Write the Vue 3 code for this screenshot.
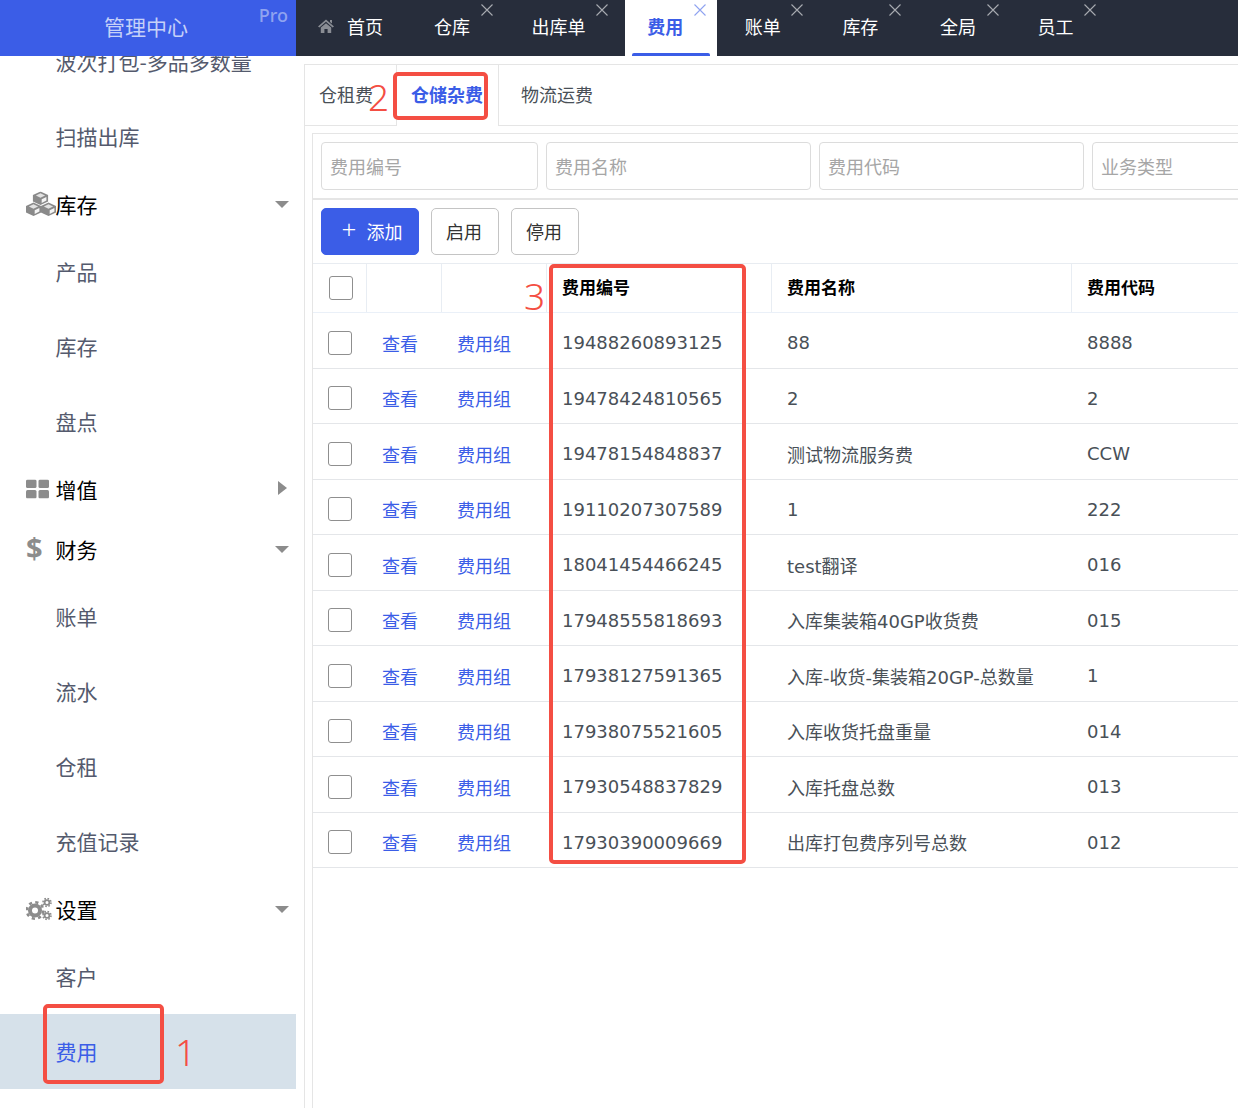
<script setup>
const tabs = [
  { name: '仓库' }, { name: '出库单' }, { name: '费用', active: true },
  { name: '账单' }, { name: '库存' }, { name: '全局' }, { name: '员工' },
]
const menu = [
  { type: 'sub', label: '波次打包-多品多数量' },
  { type: 'sub', label: '扫描出库' },
  { type: 'group', label: '库存', icon: 'cubes', caret: 'down' },
  { type: 'sub', label: '产品' },
  { type: 'sub', label: '库存' },
  { type: 'sub', label: '盘点' },
  { type: 'group', label: '增值', icon: 'grid', caret: 'right' },
  { type: 'group', label: '财务', icon: 'dollar', caret: 'down' },
  { type: 'sub', label: '账单' },
  { type: 'sub', label: '流水' },
  { type: 'sub', label: '仓租' },
  { type: 'sub', label: '充值记录' },
  { type: 'group', label: '设置', icon: 'gears', caret: 'down' },
  { type: 'sub', label: '客户' },
  { type: 'sub', label: '费用', active: true },
]
const rows = [
  ['19488260893125', '88', '8888'],
  ['19478424810565', '2', '2'],
  ['19478154848837', '测试物流服务费', 'CCW'],
  ['19110207307589', '1', '222'],
  ['18041454466245', 'test翻译', '016'],
  ['17948555818693', '入库集装箱40GP收货费', '015'],
  ['17938127591365', '入库-收货-集装箱20GP-总数量', '1'],
  ['17938075521605', '入库收货托盘重量', '014'],
  ['17930548837829', '入库托盘总数', '013'],
  ['17930390009669', '出库打包费序列号总数', '012'],
]
const filters = [
  { ph: '费用编号', cls: 'w1' },
  { ph: '费用名称', cls: 'w2' },
  { ph: '费用代码', cls: 'w2' },
  { ph: '业务类型', cls: 'w3' },
]
const cubes = [[14.5, 0], [7.5, 11], [22.5, 11]]
</script>

<template>
  <div class="page">
    <header class="top">
      <div class="logo">
        <span class="logo-text">管理中心</span>
        <span class="pro">Pro</span>
      </div>
      <nav class="nav">
        <div class="nav-tab home">
          <svg class="home-icon" viewBox="0 0 16 14" width="16" height="14">
            <path d="M8 0.5 L16 7.4 L14.6 8.4 L8 2.8 L1.4 8.4 L0 7.4 Z M12 1 H14 V4.6 L12 3 Z M2.8 8.6 L8 4.2 L13.2 8.6 V14 H9.6 V10 H6.4 V14 H2.8 Z" fill="#8a8d94" />
          </svg>
          <span>首页</span>
        </div>
        <div v-for="t in tabs" :key="t.name" class="nav-tab" :class="{ on: t.active }">
          <span>{{ t.name }}</span>
          <svg class="close" viewBox="0 0 12 12" width="12" height="12">
            <path d="M0.5 0.5 L11.5 11.5 M11.5 0.5 L0.5 11.5" stroke="currentColor" stroke-width="1.1" fill="none" />
          </svg>
        </div>
      </nav>
    </header>

    <div class="body">
      <aside class="side">
        <ul class="menu">
          <li v-for="(m, i) in menu" :key="i" class="item" :class="[m.type, { on: m.active }]">
            <span v-if="m.icon" class="ico">
              <svg v-if="m.icon === 'cubes'" viewBox="0 0 30 25" width="30" height="25">
                <g v-for="(c, k) in cubes" :key="k" :transform="`translate(${c[0]} ${c[1]})`">
                  <polygon points="0,0 7.6,3.6 7.6,10 0,13.6 -7.6,10 -7.6,3.6" fill="#8a8a8a" />
                  <polygon points="0,1.8 4.6,4 0,6.2 -4.6,4" fill="#e2e2e2" />
                  <polygon points="1.2,7.8 5.9,5.6 5.9,9 1.2,11.4" fill="#f4f4f4" />
                </g>
              </svg>
              <svg v-else-if="m.icon === 'grid'" viewBox="0 0 23 19" width="23" height="19">
                <rect x="0" y="0" width="10.5" height="8.5" rx="1.5" fill="#8c8c8c" />
                <rect x="12.5" y="0" width="10.5" height="8.5" rx="1.5" fill="#8c8c8c" />
                <rect x="0" y="10.5" width="10.5" height="8.5" rx="1.5" fill="#8c8c8c" />
                <rect x="12.5" y="10.5" width="10.5" height="8.5" rx="1.5" fill="#8c8c8c" />
              </svg>
              <span v-else-if="m.icon === 'dollar'" class="dollar">$</span>
              <svg v-else viewBox="0 0 26 23" width="26" height="23">
                <circle cx="9" cy="13" r="5" fill="none" stroke="#8c8c8c" stroke-width="4" />
                <circle cx="9" cy="13" r="8.2" fill="none" stroke="#8c8c8c" stroke-width="2.6" stroke-dasharray="3.2 3.24" />
                <circle cx="21" cy="5" r="2.4" fill="none" stroke="#8c8c8c" stroke-width="1.8" />
                <circle cx="21" cy="5" r="4" fill="none" stroke="#8c8c8c" stroke-width="1.6" stroke-dasharray="1.6 1.54" />
                <circle cx="21" cy="18" r="2.4" fill="none" stroke="#8c8c8c" stroke-width="1.8" />
                <circle cx="21" cy="18" r="4" fill="none" stroke="#8c8c8c" stroke-width="1.6" stroke-dasharray="1.6 1.54" />
              </svg>
            </span>
            <span class="label">{{ m.label }}</span>
            <i v-if="m.caret" class="caret" :class="m.caret"></i>
          </li>
        </ul>
      </aside>

      <main class="main">
        <div class="tabbar">
          <div class="tb first">仓租费</div>
          <div class="tb active">仓储杂费</div>
          <div class="tb third">物流运费</div>
          <div class="tb-rest"></div>
        </div>
        <section class="panel">
          <div class="search">
            <input v-for="f in filters" :key="f.ph" class="field" :class="f.cls" :placeholder="f.ph" />
          </div>
          <div class="tools">
            <button class="btn primary"><span class="plus">+</span>添加</button>
            <button class="btn">启用</button>
            <button class="btn">停用</button>
          </div>
          <div class="thead grid">
            <div class="cell chk-h"><span class="box"></span></div>
            <div class="cell"></div>
            <div class="cell"></div>
            <div class="cell">费用编号</div>
            <div class="cell">费用名称</div>
            <div class="cell">费用代码</div>
          </div>
          <div v-for="r in rows" :key="r[0]" class="trow grid">
            <div class="cell chk"><span class="box"></span></div>
            <div class="cell link">查看</div>
            <div class="cell link">费用组</div>
            <div class="cell">{{ r[0] }}</div>
            <div class="cell">{{ r[1] }}</div>
            <div class="cell">{{ r[2] }}</div>
          </div>
        </section>
      </main>
    </div>

    <div class="mark m1"></div><span class="num n1">1</span>
    <div class="mark m2"></div><span class="num n2">2</span>
    <div class="mark m3"></div><span class="num n3">3</span>
  </div>
</template>

<style scoped>
.page {
  position: relative;
  width: 1238px;
  height: 1108px;
  overflow: hidden;
  background: #fff;
  font-family: "DejaVu Sans", "Noto Sans CJK SC", sans-serif;
  font-size: 18px;
  color: #495057;
}
.page > * { box-sizing: border-box; }
.top { display: flex; height: 56px; background: #272d3b; }
.logo {
  position: relative;
  width: 296px;
  flex: none;
  box-sizing: border-box;
  padding: 0 3px 4px 0;
  background: #3b5de7;
  display: flex;
  align-items: center;
  justify-content: center;
}
.logo-text { font-family: "Noto Sans CJK SC", sans-serif; font-size: 21px; color: #c6d1f8; margin-left: -1px; }
.pro {
  position: absolute;
  right: 8px;
  top: 3px;
  font-family: "Noto Sans", sans-serif;
  font-weight: 500;
  font-size: 18px;
  color: #8fa3f0;
}
.nav { display: flex; }
.nav-tab {
  position: relative;
  display: flex;
  align-items: center;
  box-sizing: border-box;
  height: 56px;
  padding: 0 33.6px 4px 22px;
  margin-right: 6px;
  color: #fff;
  font-family: "Noto Sans CJK SC", sans-serif;
  font-size: 18px;
}
.nav-tab.home { padding-right: 23px; margin-right: 6px; }
.home-icon { margin-right: 13px; margin-top: -1px; }
.close { position: absolute; right: 11px; top: 4px; color: #a8abb1; }
.nav-tab.on { background: #fff; color: #3b5de7; font-weight: 700; }
.nav-tab.on .close { color: #8fa3f0; }
.nav-tab.on::after {
  content: "";
  position: absolute;
  left: 7px;
  right: 7px;
  bottom: 0;
  height: 3px;
  border-radius: 2px 2px 0 0;
  background: #3b5de7;
}
.body { display: flex; height: 1052px; }
.side { width: 296px; flex: none; overflow: hidden; }
.menu { list-style: none; margin: -32px 0 0; padding: 0; font-family: "Noto Sans CJK SC", sans-serif; font-size: 21px; }
.item { display: flex; align-items: center; box-sizing: border-box; padding-left: 55.5px; position: relative; }
.item.sub { height: 75px; padding-bottom: 2px; color: #545a6d; }
.item.group { height: 60px; padding-bottom: 1px; color: #000; }
.item.on { background: #d6e1ea; color: #3b5de7; }
.ico { position: absolute; left: 26px; top: 50%; display: flex; transform: translateY(-50%); }
.dollar { font-family: "Open Sans", sans-serif; font-weight: 700; font-size: 29px; color: #8c8c8c; line-height: 30px; margin-top: -3px; }
.caret { position: absolute; width: 0; height: 0; border-style: solid; border-color: transparent; }
.caret.down { right: 7px; top: 27px; border-width: 7px 7px 0; border-top-color: #8c8c8c; }
.caret.right { right: 9px; top: 22px; border-width: 7.5px 0 7.5px 9px; border-left-color: #8c8c8c; }
.main {
  flex: none;
  width: 934px;
  margin: 8px 0 0 8px;
  border-left: 1px solid #e5e5e5;
  overflow: hidden;
  box-sizing: border-box;
}
.tabbar {
  display: flex;
  height: 62px;
  box-sizing: border-box;
  border-top: 1px solid #e5e5e5;
  font-family: "Noto Sans CJK SC", sans-serif;
  font-size: 18px;
  color: #495057;
}
.tb { display: flex; align-items: center; box-sizing: border-box; padding-bottom: 2px; border-bottom: 1px solid #e5e5e5; }
.tb.first { width: 91px; padding-left: 14px; }
.tb.active {
  width: 103px;
  padding-left: 14px;
  padding-bottom: 4px;
  border-bottom: none;
  border-left: 1px solid #e5e5e5;
  border-right: 1px solid #e5e5e5;
  color: #3b5de7;
  font-weight: 700;
}
.tb.third { width: 110px; padding-left: 22px; }
.tb-rest { flex: 1; border-bottom: 1px solid #e5e5e5; }
.panel {
  margin: 7px 0 0 7px;
  border-left: 1px solid #e5e5e5;
  border-top: 1px solid #e5e5e5;
  height: 990px;
  box-sizing: border-box;
  width: 927px;
  overflow: hidden;
}
.search {
  display: flex;
  gap: 8px;
  padding: 8px;
  border-bottom: 2px solid #e5e5e5;
}
.field {
  flex: none;
  box-sizing: border-box;
  height: 48px;
  padding: 0 8px;
  border: 1px solid #dcdcdc;
  border-radius: 4px;
  outline: none;
  font-family: "Noto Sans CJK SC", sans-serif;
  font-size: 18px;
  color: #495057;
  background: #fff;
}
.field::placeholder { color: #a6a6a6; opacity: 1; }
.w1 { width: 217px; }
.w2 { width: 265px; }
.w3 { width: 200px; }
.tools { display: flex; gap: 12px; padding: 8px; height: 63px; box-sizing: border-box; }
.btn {
  box-sizing: border-box;
  height: 47px;
  width: 68px;
  padding: 0 2px 2px 0;
  border: 1px solid #c4c4c4;
  border-radius: 5px;
  background: #fff;
  color: #333;
  font-family: "Noto Sans CJK SC", sans-serif;
  font-size: 18px;
}
.btn.primary {
  width: 98px;
  padding: 0 0 2px 4px;
  background: #3b5de7;
  border-color: #3b5de7;
  color: #fff;
  display: flex;
  align-items: center;
  justify-content: center;
}
.plus { font-size: 26px; font-weight: 300; line-height: 1; margin: -3px 10px 0 0; font-family: "Noto Sans", sans-serif; }
.grid {
  display: grid;
  grid-template-columns: 54px 75px 105px 225px 300px 168px;
  box-sizing: border-box;
}
.cell { display: flex; align-items: center; padding-left: 15px; white-space: nowrap; box-sizing: border-box; }
.thead {
  height: 50px;
  border-top: 1px solid #e8ecf1;
  border-bottom: 1px solid #eaf0f8;
  font-family: "Noto Sans CJK SC", sans-serif;
  font-size: 17px;
  font-weight: 700;
  color: #000;
}
.thead .cell { border-right: 1px solid #e8edf3; padding-bottom: 3px; }
.thead .cell:last-child { border-right: none; }
.thead .cell.chk-h { padding-bottom: 0; }
.trow { height: 55.5px; border-bottom: 1px solid #e4e6e9; }
.trow .cell { padding-top: 5px; }
.box {
  display: block;
  box-sizing: border-box;
  width: 24px;
  height: 24px;
  border: 1px solid #8f8f8f;
  border-radius: 3px;
  background: #fff;
}
.chk-h { padding-left: 16px; }
.chk { padding-left: 15px; }
.link { color: #3b5de7; }
.mark {
  position: absolute;
  box-sizing: border-box;
  border: 4px solid #f44e43;
  border-radius: 5px;
  pointer-events: none;
}
.m1 { left: 43px; top: 1004px; width: 121px; height: 80px; }
.m2 { left: 393px; top: 72px; width: 95px; height: 48px; }
.m3 { left: 549px; top: 264px; width: 197px; height: 600px; }
.num {
  position: absolute;
  font-family: "Noto Sans", sans-serif;
  font-weight: 300;
  font-size: 37px;
  line-height: 40px;
  color: #f44e43;
}
.n1 { left: 175px; top: 1032px; }
.n2 { left: 368px; top: 77px; }
.n3 { left: 524px; top: 276px; }
</style>

<style>
html, body { margin: 0; background: #fff; }
</style>
